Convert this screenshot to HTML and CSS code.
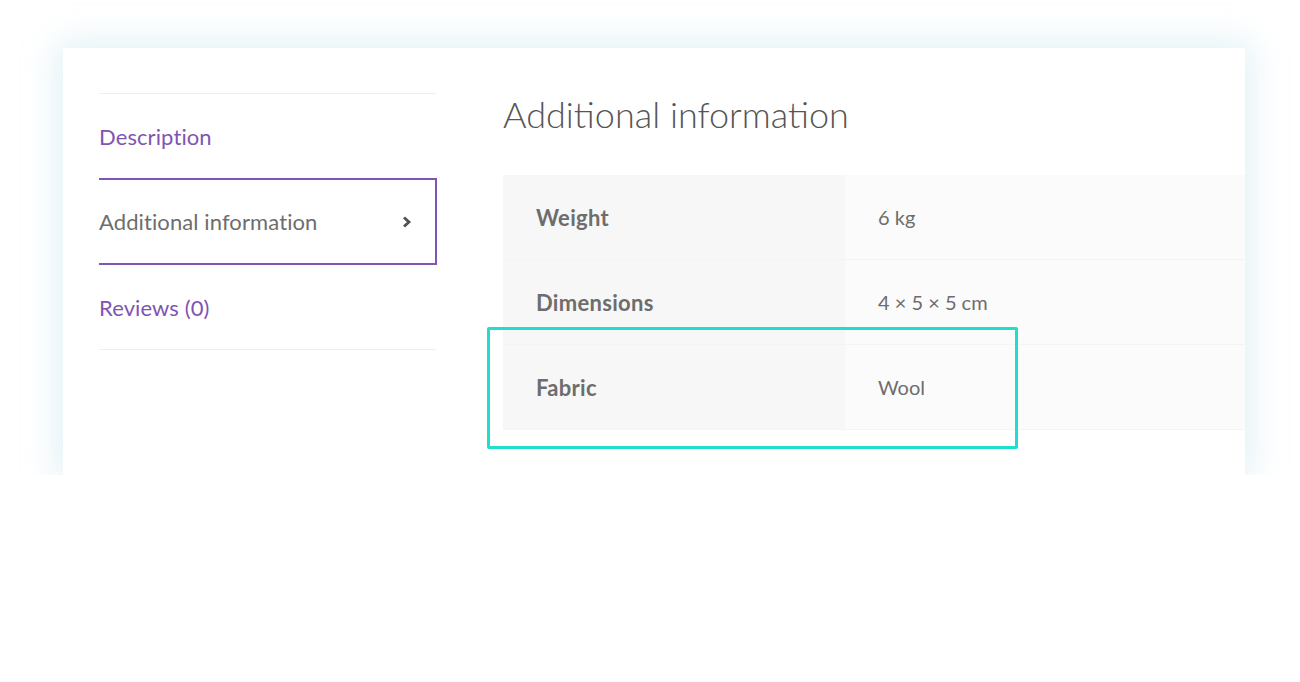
FILE: index.html
```html
<!DOCTYPE html>
<html lang="en">
<head>
    <meta charset="UTF-8">
    <title>Additional information</title>
    <link rel="stylesheet" href="styles.css">
</head>
<body>
    <div class="card">
        <ul class="tabs">
            <li class="tab"><a href="#">Description</a></li>
            <li class="tab active">
                <a href="#">Additional information</a>
                <svg class="chevron" width="12" height="14" viewBox="0 0 12 14"><path d="M3 2.5 L8 7 L3 11.5" fill="none" stroke="#515151" stroke-width="2.8" stroke-linejoin="miter"/></svg>
            </li>
            <li class="tab"><a href="#">Reviews (0)</a></li>
        </ul>
        <div class="panel">
            <h2>Additional information</h2>
            <div class="table-wrap">
                <table class="attributes">
                    <tr><th>Weight</th><td>6 kg</td></tr>
                    <tr><th>Dimensions</th><td>4 × 5 × 5 cm</td></tr>
                    <tr><th>Fabric</th><td>Wool</td></tr>
                </table>
                <div class="highlight"></div>
            </div>
        </div>
    </div>
</body>
</html>
```

FILE: styles.css
```css
body {
    margin: 0;
    padding: 48px 55px 0 63px;
    background: #fff;
    font-family: Lato, "Open Sans", sans-serif;
    color: #6d6d6d;
}
.card {
    display: flex;
    height: 427px;
    box-sizing: border-box;
    padding: 45px 0 0 36px;
    background: #fff;
    box-shadow: 0 0 32px 6px rgba(170, 215, 228, 0.35);
}
.tabs {
    list-style: none;
    margin: 0;
    padding: 0;
    width: 337px;
    border-top: 1px solid #eee;
    border-bottom: 1px solid #eee;
    align-self: flex-start;
}
.tab {
    display: flex;
    align-items: center;
    justify-content: space-between;
    height: 84px;
    font-size: 22px;
    letter-spacing: 0.1px;
}
.tab a {
    color: #7f54b3;
    text-decoration: none;
}
.tab.active {
    height: 83px;
    border: 2px solid #7f54b3;
    border-left: none;
    margin-right: -1px;
    padding-right: 22px;
}
.tab.active a {
    color: #6d6d6d;
}
.panel {
    flex: 1;
    margin-left: 67px;
}
.panel h2 {
    margin: -2px 0 0;
    font-size: 36px;
    font-weight: 300;
    line-height: 46px;
    color: #555;
}
.table-wrap {
    position: relative;
    margin-top: 38px;
}
.attributes {
    width: 100%;
    border-collapse: collapse;
    font-size: 20px;
}
.attributes th,
.attributes td {
    height: 84px;
    padding: 0 33px;
    text-align: left;
    border-bottom: 1px solid #f4f4f4;
}
.attributes th {
    width: 276px;
    background: #f7f7f7;
    font-size: 22px;
    font-weight: 700;
    letter-spacing: 0.3px;
}
.attributes td {
    background: #fbfbfb;
    font-weight: 400;
}
.highlight {
    position: absolute;
    left: -16px;
    top: 152px;
    width: 525px;
    height: 116px;
    border: 3px solid #1fdece;
    border-radius: 2px;
}
```
